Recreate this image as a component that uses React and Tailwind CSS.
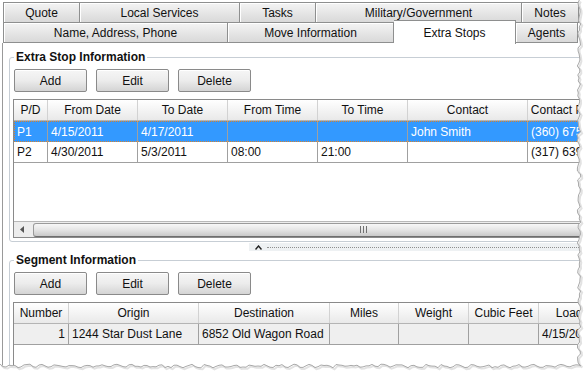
import React from 'react';

const tabBase =
  'flex items-center justify-center border-y border-r border-[#8e8f8f] bg-gradient-to-b from-[#f4f4f4] to-[#d9d9d9] text-[#111] shadow-[inset_1px_1px_0_#ffffff]';

const row1 = [
  { label: 'Quote', w: 'w-[76px]' },
  { label: 'Local Services', w: 'w-[160px]' },
  { label: 'Tasks', w: 'w-[76px]' },
  { label: 'Military/Government', w: 'w-[206px]' },
  { label: 'Notes', w: 'w-[57px]' },
];

const stopCols = [
  { label: 'P/D', w: 'w-[34px]' },
  { label: 'From Date', w: 'w-[90px]' },
  { label: 'To Date', w: 'w-[90px]' },
  { label: 'From Time', w: 'w-[90px]' },
  { label: 'To Time', w: 'w-[90px]' },
  { label: 'Contact', w: 'w-[120px]' },
  { label: 'Contact Phone', w: 'w-[86px]' },
];

const stops = [
  ['P1', '4/15/2011', '4/17/2011', '', '', 'John Smith', '(360) 675-1234'],
  ['P2', '4/30/2011', '5/3/2011', '08:00', '21:00', '', '(317) 639-4321'],
];

const segCols = [
  { label: 'Number', w: 'w-[55px]' },
  { label: 'Origin', w: 'w-[130px]' },
  { label: 'Destination', w: 'w-[131px]' },
  { label: 'Miles', w: 'w-[69px]' },
  { label: 'Weight', w: 'w-[70px]' },
  { label: 'Cubic Feet', w: 'w-[70px]' },
  { label: 'Load Date', w: 'w-[90px]' },
];

function Button({ children }) {
  return (
    <button className="w-[73px] h-[23px] rounded-[2px] border border-[#8a8a8a] bg-gradient-to-b from-[#f6f6f6] via-[#ececec] to-[#d4d4d4] shadow-[inset_0_1px_0_#ffffff] text-[#111] leading-none">
      {children}
    </button>
  );
}

function ButtonBar() {
  return (
    <div className="flex gap-[9px]">
      <Button>Add</Button>
      <Button>Edit</Button>
      <Button>Delete</Button>
    </div>
  );
}

function HeaderRow({ cols }) {
  return (
    <div className="flex h-[21px] border-b border-[#b4b4b4] bg-gradient-to-b from-[#ffffff] to-[#e9e9e9] shrink-0">
      {cols.map((c) => (
        <div
          key={c.label}
          className={`${c.w} shrink-0 flex items-center justify-center border-r border-[#d2d2d2] whitespace-nowrap overflow-hidden`}
        >
          {c.label}
        </div>
      ))}
    </div>
  );
}

function Group({ title, children }) {
  return (
    <fieldset className="w-[620px] border border-[#c7ced5] rounded-[3px] px-[4px] pt-[4px] pb-[3px]">
      <legend className="px-[2px] font-bold leading-[15px] text-[#111]">{title}</legend>
      {children}
    </fieldset>
  );
}

function TornEdge() {
  // jagged right and bottom edges of the clipped screenshot
  const jit = (i, k) => Math.sin(i * 12.9898 + k * 78.233) * 43758.5453 % 1;
  const right = [];
  for (let y = 0; y <= 366; y += 3) right.push([579 + jit(y, 1) * 1.8, y]);
  const bottom = [];
  for (let x = 579; x >= 0; x -= 3) bottom.push([x, 366 + jit(x, 2) * 1.8]);
  const edge = [...right, ...bottom];
  const pts = edge.map((p) => `${p[0].toFixed(1)},${p[1].toFixed(1)}`).join(' ');
  const cover = `585,0 ${pts} 0,371 585,371`;
  return (
    <svg className="absolute inset-0 pointer-events-none" width="585" height="371">
      <polygon points={cover} fill="#ffffff" />
      <polyline
        points={edge.map((p) => `${(p[0] + 1.5).toFixed(1)},${(p[1] + 1.5).toFixed(1)}`).join(' ')}
        fill="none"
        stroke="#e2e2e2"
        strokeWidth="2"
      />
      <polyline points={pts} fill="none" stroke="#a9a9a9" strokeWidth="1" />
    </svg>
  );
}

export default function App() {
  return (
    <div className="relative w-[585px] h-[371px] overflow-hidden bg-white font-['Liberation_Sans',Arial,sans-serif] text-[12px] text-[#111]">
      <div className="w-[582px] h-[369px] overflow-hidden pt-[2px]">
        {/* tab rows */}
        <div className="ml-[3px] flex h-[21px] w-[700px] border-l border-[#8e8f8f]">
          {row1.map((t) => (
            <div key={t.label} className={`${tabBase} ${t.w} shrink-0`}>
              {t.label}
            </div>
          ))}
        </div>
        <div className="ml-[3px] flex h-[21px] w-[700px] border-l border-[#8e8f8f] -mt-px">
          <div className={`${tabBase} w-[224px] shrink-0`}>Name, Address, Phone</div>
          <div className={`${tabBase} w-[166px] shrink-0`}>Move Information</div>
          <div className="relative z-10 w-[122px] h-[24px] -mt-[2px] shrink-0 flex justify-center pt-[3px] bg-white border-t border-r border-[#8e8f8f] text-[#111]">
            Extra Stops
          </div>
          <div className={`${tabBase} w-[62px] shrink-0`}>Agents</div>
        </div>

        {/* content panel */}
        <div className="ml-[2px] h-[330px] border-l border-[#9a9a9a] bg-white pl-[6px] pt-[7px]">
          <Group title="Extra Stop Information">
            <ButtonBar />
            <div className="-ml-px mt-[7px] h-[139px] flex flex-col border border-[#8a8a8a] overflow-hidden bg-white">
              <HeaderRow cols={stopCols} />
              {stops.map((r, i) => (
                <div
                  key={r[0]}
                  className={
                    i === 0
                      ? 'flex h-[21px] shrink-0 bg-[#3399ff] text-white outline outline-1 outline-dotted outline-[#d9822b] -outline-offset-1'
                      : 'flex h-[21px] shrink-0 border-b border-[#a0a0a0] text-[#111]'
                  }
                >
                  {r.map((v, j) => (
                    <div
                      key={j}
                      className={`${stopCols[j].w} shrink-0 flex items-center pl-[3px] border-r border-[#a0a0a0] whitespace-nowrap overflow-hidden`}
                    >
                      {v}
                    </div>
                  ))}
                </div>
              ))}
              <div className="flex-1" />
              {/* horizontal scrollbar */}
              <div className="h-[16px] shrink-0 flex items-center bg-[#ededed] border-t border-[#b8b8b8]">
                <div className="w-[17px] h-full flex items-center justify-center">
                  <svg width="5" height="7" viewBox="0 0 5 7">
                    <path d="M4 0 L0 3.5 L4 7 Z" fill="#555" />
                  </svg>
                </div>
                <div className="ml-[2px] h-[14px] w-[600px] rounded-l-[3px] border border-[#9a9a9a] border-b-[#6e6e6e] bg-gradient-to-b from-[#f7f7f7] via-[#e4e4e4] to-[#c9c9c9] flex items-center pl-[326px]">
                  <svg width="7" height="7" viewBox="0 0 7 7">
                    <path d="M0.5 0 V7 M3.5 0 V7 M6.5 0 V7" stroke="#707070" strokeWidth="1" />
                  </svg>
                </div>
              </div>
            </div>
          </Group>

          {/* splitter */}
          <div className="ml-[240px] mt-px h-[8px] w-[340px] flex items-center bg-[#eef1f3]">
            <svg className="ml-[6px]" width="7" height="5" viewBox="0 0 7 5">
              <path d="M0.5 4.5 L3.5 1 L6.5 4.5" fill="none" stroke="#222" strokeWidth="1.4" />
            </svg>
            <div className="ml-[5px] flex-1 border-t border-dotted border-[#8f8f8f]" />
          </div>

          <div className="mt-[2px]">
            <Group title="Segment Information">
              <ButtonBar />
              <div className="-ml-px mt-[7px] h-[100px] flex flex-col border border-[#8a8a8a] overflow-hidden bg-white">
                <HeaderRow cols={segCols} />
                <div className="flex h-[21px] shrink-0 bg-[#efefef] border-b border-[#a0a0a0]">
                  {['1', '1244 Star Dust Lane', '6852 Old Wagon Road', '', '', '', '4/15/2011'].map((v, j) => (
                    <div
                      key={j}
                      className={`${segCols[j].w} shrink-0 flex items-center ${j === 0 ? 'justify-end pr-[3px]' : 'pl-[3px]'} border-r border-[#a0a0a0] whitespace-nowrap overflow-hidden`}
                    >
                      {v}
                    </div>
                  ))}
                </div>
              </div>
            </Group>
          </div>
        </div>
      </div>
      <TornEdge />
    </div>
  );
}
